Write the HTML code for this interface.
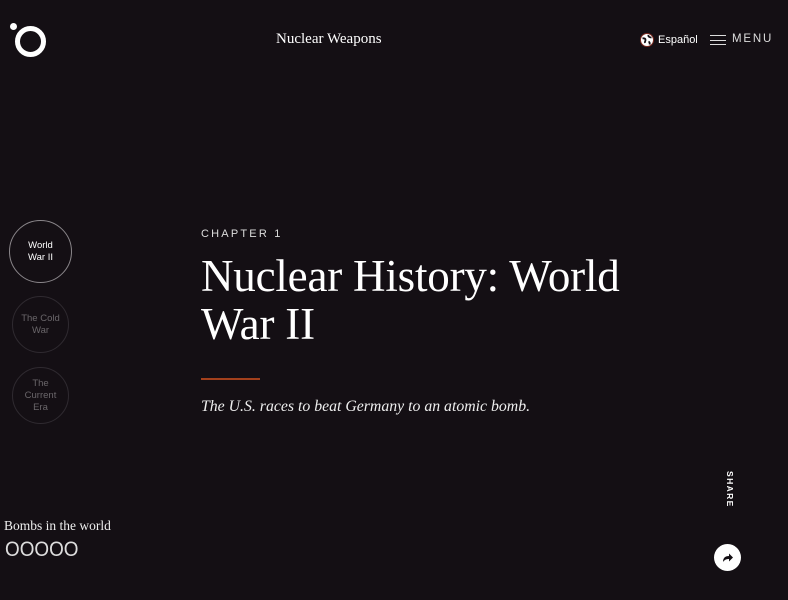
<!DOCTYPE html>
<html><head><meta charset="utf-8"><style>
*{margin:0;padding:0;box-sizing:border-box}
body{width:788px;height:600px;background:#140f14;color:#fff;font-family:"Liberation Serif",serif;position:relative;overflow:hidden}
.abs{position:absolute}
.circ{position:absolute;border-radius:50%;display:flex;align-items:center;justify-content:center;text-align:center;font-family:"Liberation Sans",sans-serif;font-size:9.5px;line-height:12px}
</style></head><body>
<div class="abs" style="left:10px;top:23px;width:7px;height:7px;border-radius:50%;background:#fff"></div>
<div class="abs" style="left:15px;top:26px;width:31px;height:31px;border-radius:50%;border:5px solid #fff"></div>
<div class="abs" style="left:276px;top:31px;font-size:15px">Nuclear Weapons</div>
<svg class="abs" style="left:640px;top:33px" width="14" height="14" viewBox="0 0 14 14"><circle cx="7" cy="7" r="6.5" fill="#fff" stroke="#7a2a20" stroke-width="1"/><path d="M2.5 5.5c1.5-.5 3 0 3 1.5s-1 1.5-.5 3M8.5 2c-.5 1.5 1 2.5 3 2.5M8.5 8.5c1 .5 1.5 1.5 1 3" stroke="#140f14" stroke-width="1.8" fill="none"/></svg>
<div class="abs" style="left:658px;top:34px;font-family:'Liberation Sans',sans-serif;font-size:11px">Español</div>
<div class="abs" style="left:710px;top:35px;width:16px;height:10px;border-top:1.5px solid #ddd;border-bottom:1.5px solid #ddd"></div>
<div class="abs" style="left:710px;top:39.5px;width:16px;height:1.5px;background:#ddd"></div>
<div class="abs" style="left:732px;top:33px;font-family:'Liberation Sans',sans-serif;font-size:11.5px;letter-spacing:1.8px;color:#ddd">MENU</div>
<div class="circ" style="left:9px;top:220px;width:63px;height:63px;border:1px solid #8a868a;color:#fff">World<br>War II</div>
<div class="circ" style="left:12px;top:296px;width:57px;height:57px;border:1px solid #2f2a30;color:#6a666a">The Cold<br>War</div>
<div class="circ" style="left:12px;top:367px;width:57px;height:57px;border:1px solid #2f2a30;color:#6a666a">The<br>Current<br>Era</div>
<div class="abs" style="left:201px;top:228px;font-family:'Liberation Sans',sans-serif;font-size:11px;letter-spacing:2.2px;color:#ddd">CHAPTER 1</div>
<div class="abs" style="left:201px;top:252px;font-size:45px;line-height:48px;width:460px;letter-spacing:-0.2px">Nuclear History: World War II</div>
<div class="abs" style="left:201px;top:378px;width:59px;height:2px;background:#a3401c"></div>
<div class="abs" style="left:201px;top:398px;font-size:15.8px;font-style:italic;color:#eee">The U.S. races to beat Germany to an atomic bomb.</div>
<div class="abs" style="left:4px;top:518px;font-size:13.5px;color:#eee">Bombs in the world</div>
<div class="abs" style="left:5px;top:538px;font-family:'Liberation Sans',sans-serif;font-size:21px;color:#ddd;transform:scaleX(0.9);transform-origin:left">OOOOO</div>
<div class="abs" style="left:721px;top:471px;width:14px;font-family:'Liberation Sans',sans-serif;font-size:8.5px;font-weight:bold;letter-spacing:1.4px;writing-mode:vertical-rl;color:#fff">SHARE</div>
<div class="abs" style="left:714px;top:544px;width:27px;height:27px;border-radius:50%;background:#fff"></div>
<svg class="abs" style="left:720px;top:550px" width="15" height="15" viewBox="0 0 15 15"><path d="M3 12c0-4 2-6 6-6V3.5l4 4-4 4V9c-3 0-4.5 1-6 3z" fill="#140f14"/></svg>
</body></html>
